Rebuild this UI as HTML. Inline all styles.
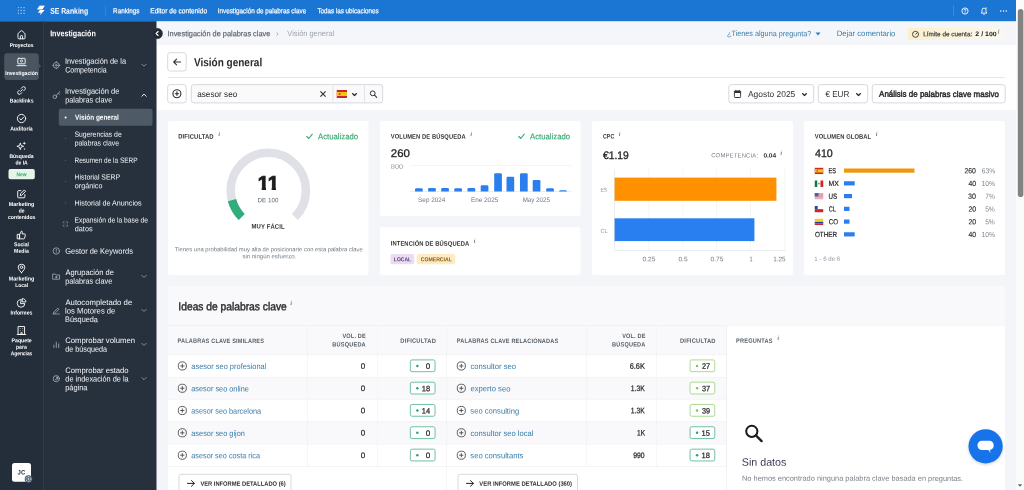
<!DOCTYPE html>
<html lang="es">
<head>
<meta charset="utf-8">
<title>SE Ranking - Investigación de palabras clave</title>
<style>
html,body{margin:0;padding:0;}
body{width:1024px;height:490px;overflow:hidden;background:#f4f5f9;font-family:"Liberation Sans",sans-serif;}
#app{position:relative;width:1024px;height:490px;overflow:hidden;will-change:transform;}
#gfx{position:absolute;left:0;top:0;display:block;}
.t{position:absolute;left:0;top:0;white-space:nowrap;display:block;margin:0;padding:0;transform-origin:0 0;}

</style>
</head>
<body>
<div id="app">
<svg id="gfx" width="1024" height="490" viewBox="0 0 1024 490">
<defs><filter id="sh" x="-30%" y="-30%" width="160%" height="160%"><feDropShadow dx="0" dy="1" stdDeviation="1.6" flood-color="#000" flood-opacity="0.2"/></filter></defs>
<rect x="0" y="0" width="1024" height="490" fill="#f4f5f9"/>
<rect x="156" y="21" width="860" height="24" fill="#f5f6fa"/>
<svg x="815" y="32" width="6" height="4" viewBox="0 0 6 4"><path d="M0.5 0.5 L5.5 0.5 L3 3.5 Z" fill="#2f7fb8"/></svg>
<defs><linearGradient id="lg" x1="0" x2="1" y1="0" y2="0"><stop offset="0" stop-color="#fbefcc"/><stop offset="1" stop-color="#fbf8f0"/></linearGradient></defs><rect x="907.5" y="27.8" width="96" height="12.2" rx="3" fill="url(#lg)"/>
<svg x="911.5" y="30" width="8" height="8" viewBox="0 0 8 8"><circle cx="4" cy="4.3" r="3" fill="none" stroke="#333" stroke-width="0.9"/><path d="M4 4.5 L5.6 2.8" stroke="#333" stroke-width="0.9" fill="none"/></svg>
<rect x="157" y="45" width="859" height="65" fill="#fff"/>
<rect x="168" y="77" width="837" height="1" fill="#e6e8ec"/>
<rect x="167.7" y="52.7" width="18.5" height="18.3" rx="2.5" fill="#fff" stroke="#d6d9de" stroke-width="1"/>
<svg x="172" y="57.5" width="10" height="9" viewBox="0 0 10 9"><path d="M8.6 4.5 H1.8 M4.6 1.6 L1.7 4.5 L4.6 7.4" fill="none" stroke="#333" stroke-width="1.1" stroke-linecap="round" stroke-linejoin="round"/></svg>
<rect x="167.7" y="84.6" width="18.5" height="18.3" rx="2.5" fill="#fff" stroke="#d6d9de" stroke-width="1"/>
<svg x="171.9" y="88.7" width="10" height="10" viewBox="0 0 10 10"><circle cx="5" cy="5" r="4" fill="none" stroke="#2e2e2e" stroke-width="1.15"/><path d="M5 2.9 V7.1 M2.9 5 H7.1" stroke="#2e2e2e" stroke-width="1.15" fill="none"/></svg>
<rect x="191.3" y="84.6" width="191.4" height="18.3" rx="2.5" fill="#fafafb" stroke="#d6d9de" stroke-width="1"/>
<rect x="332.5" y="85.5" width="1" height="16.5" fill="#e1e3e7"/>
<rect x="364" y="85.5" width="1" height="16.5" fill="#e1e3e7"/>
<svg x="319.5" y="90.5" width="7" height="7" viewBox="0 0 7 7"><path d="M0.9 0.9 L6.1 6.1 M6.1 0.9 L0.9 6.1" stroke="#2e2e2e" stroke-width="1.1" fill="none"/></svg>
<svg x="336.5" y="90" width="10.5" height="8" viewBox="0 0 10.5 8"><rect width="10.5" height="8" fill="#c8252c"/><rect y="2" width="10.5" height="4" fill="#f6c315"/><rect x="2.2" y="3" width="1.8" height="2" fill="#b5651d"/></svg>
<svg x="351.5" y="92.5" width="6" height="4" viewBox="0 0 6 4"><path d="M0.8 0.8 L3 3 L5.2 0.8" stroke="#2a2a2a" stroke-width="1.25" fill="none"/></svg>
<svg x="369.2" y="89.8" width="9" height="9" viewBox="0 0 9 9"><circle cx="3.5" cy="3.5" r="2.4" fill="none" stroke="#333" stroke-width="1"/><path d="M5.4 5.4 L7.5 7.5" stroke="#333" stroke-width="1.1" stroke-linecap="round"/></svg>
<rect x="728.8" y="84.6" width="84.9" height="18.3" rx="2.5" fill="#fff" stroke="#d6d9de" stroke-width="1"/>
<svg x="733.5" y="89.5" width="8" height="9" viewBox="0 0 8 9"><rect x="0.8" y="1.5" width="6.4" height="6.5" rx="0.8" fill="none" stroke="#333" stroke-width="1"/><rect x="0.8" y="1.5" width="6.4" height="2" fill="#333"/><path d="M2.4 0.4 V2 M5.6 0.4 V2" stroke="#333" stroke-width="0.9"/></svg>
<svg x="801.5" y="92.5" width="6" height="4" viewBox="0 0 6 4"><path d="M0.8 0.8 L3 3 L5.2 0.8" stroke="#2a2a2a" stroke-width="1.25" fill="none"/></svg>
<rect x="818.3" y="84.6" width="49.4" height="18.3" rx="2.5" fill="#fff" stroke="#d6d9de" stroke-width="1"/>
<svg x="855.5" y="92.5" width="6" height="4" viewBox="0 0 6 4"><path d="M0.8 0.8 L3 3 L5.2 0.8" stroke="#2a2a2a" stroke-width="1.25" fill="none"/></svg>
<rect x="872.3" y="84.6" width="132.9" height="18.3" rx="2.5" fill="#fff" stroke="#d6d9de" stroke-width="1"/>
<rect x="0" y="0" width="1016" height="21.2" fill="#1b75d3"/>
<svg x="17.6" y="6.9" width="8" height="8" viewBox="0 0 8 8"><rect x="0.0" y="0.0" width="1.3" height="1.3" fill="#9cc4ee"/><rect x="2.9" y="0.0" width="1.3" height="1.3" fill="#9cc4ee"/><rect x="5.8" y="0.0" width="1.3" height="1.3" fill="#9cc4ee"/><rect x="0.0" y="2.9" width="1.3" height="1.3" fill="#9cc4ee"/><rect x="2.9" y="2.9" width="1.3" height="1.3" fill="#9cc4ee"/><rect x="5.8" y="2.9" width="1.3" height="1.3" fill="#9cc4ee"/><rect x="0.0" y="5.8" width="1.3" height="1.3" fill="#9cc4ee"/><rect x="2.9" y="5.8" width="1.3" height="1.3" fill="#9cc4ee"/><rect x="5.8" y="5.8" width="1.3" height="1.3" fill="#9cc4ee"/></svg>
<svg x="36.3" y="5.2" width="9" height="10.5" viewBox="0 0 9 10.5"><path d="M3.4 0.4 H8.6 L6.2 4.2 H0.6 Z M3.6 4.9 H8.4 L3.6 10.1 L4.4 7.6 H1.6 Z" fill="#fff"/></svg>
<rect x="105" y="5.5" width="0.8" height="10" fill="#3a88da"/>
<rect x="953" y="5.5" width="1" height="10" fill="#3d8bdc"/>
<svg x="961" y="7" width="8" height="8" viewBox="0 0 8 8"><circle cx="4" cy="4" r="3.1" fill="none" stroke="#fff" stroke-width="0.9"/><path d="M3 3.3 Q3 2.2 4 2.2 Q5 2.2 5 3.1 Q5 3.8 4 4.3 V4.8" fill="none" stroke="#fff" stroke-width="0.8"/><circle cx="4" cy="5.8" r="0.5" fill="#fff"/></svg>
<svg x="980" y="6.5" width="8" height="9" viewBox="0 0 8 9"><path d="M1.2 6.6 H6.8 L6 5.4 V3.6 Q6 1.6 4 1.6 Q2 1.6 2 3.6 V5.4 Z" fill="none" stroke="#fff" stroke-width="0.9" stroke-linejoin="round"/><path d="M3.2 7.6 Q4 8.4 4.8 7.6" stroke="#fff" stroke-width="0.8" fill="none"/><circle cx="6.3" cy="1.6" r="0.9" fill="#7fe0a0"/></svg>
<svg x="999.5" y="9.5" width="8" height="3" viewBox="0 0 8 3"><circle cx="1.2" cy="1.5" r="0.75" fill="#fff"/><circle cx="4" cy="1.5" r="0.75" fill="#fff"/><circle cx="6.8" cy="1.5" r="0.75" fill="#fff"/></svg>
<rect x="1016" y="0" width="8" height="490" fill="#fbfbfc"/>
<rect x="1017.8" y="9" width="5.6" height="188" rx="2.8" fill="#828282"/>
<svg x="1017.5" y="484" width="5" height="3" viewBox="0 0 5 3"><path d="M0.3 0.3 H4.7 L2.5 2.7 Z" fill="#666"/></svg>
<rect x="0" y="21.2" width="43.5" height="469" fill="#242e3a"/>
<rect x="43" y="21.2" width="113.5" height="469" fill="#27313e"/>
<rect x="43" y="21.2" width="0.6" height="469" fill="#3a4450"/>
<rect x="4.2" y="53.3" width="34.6" height="26.7" rx="3" fill="#4a5562"/>
<svg x="38.6" y="63.5" width="3" height="5" viewBox="0 0 3 5"><path d="M0 0 L2.6 2.5 L0 5 Z" fill="#4a5562"/></svg>
<svg x="16" y="29.3" width="11" height="11" viewBox="0 0 18 18"><path d="M3.2 7.6 Q3.2 6.8 3.9 6.2 L8.1 2.6 Q9 1.9 9.9 2.6 L14.1 6.2 Q14.8 6.8 14.8 7.6 V14.2 Q14.8 15.6 13.4 15.6 H4.6 Q3.2 15.6 3.2 14.2 Z" fill="none" stroke="#fff" stroke-width="1.5" stroke-linecap="round" stroke-linejoin="round"/><path d="M7.2 15.4 V11.4 Q7.2 10.4 8.2 10.4 H9.8 Q10.8 10.4 10.8 11.4 V15.4" fill="none" stroke="#fff" stroke-width="1.5" stroke-linecap="round" stroke-linejoin="round"/></svg>
<svg x="16" y="56.5" width="11" height="11" viewBox="0 0 18 18"><rect x="3" y="3" width="12" height="9" rx="1" fill="none" stroke="#fff" stroke-width="1.5" stroke-linecap="round" stroke-linejoin="round"/><path d="M1.5 15 H16.5" fill="none" stroke="#fff" stroke-width="1.5" stroke-linecap="round" stroke-linejoin="round"/><circle cx="9" cy="7.3" r="1.8" fill="none" stroke="#fff" stroke-width="1.3"/></svg>
<svg x="16" y="85" width="11" height="11" viewBox="0 0 18 18"><path d="M7.5 10.5 L10.5 7.5" fill="none" stroke="#fff" stroke-width="1.5" stroke-linecap="round" stroke-linejoin="round"/><path d="M8.5 5.5 L10.5 3.5 Q12.5 1.8 14.5 3.5 Q16.2 5.5 14.5 7.5 L12.5 9.5" fill="none" stroke="#fff" stroke-width="1.5" stroke-linecap="round" stroke-linejoin="round"/><path d="M9.5 12.5 L7.5 14.5 Q5.5 16.2 3.5 14.5 Q1.8 12.5 3.5 10.5 L5.5 8.5" fill="none" stroke="#fff" stroke-width="1.5" stroke-linecap="round" stroke-linejoin="round"/></svg>
<svg x="16" y="113" width="11" height="11" viewBox="0 0 18 18"><circle cx="9" cy="9" r="6.8" fill="none" stroke="#fff" stroke-width="1.5" stroke-linecap="round" stroke-linejoin="round"/><path d="M6 9.2 L8.2 11.4 L12.2 7" fill="none" stroke="#fff" stroke-width="1.5" stroke-linecap="round" stroke-linejoin="round"/></svg>
<svg x="16" y="140.5" width="11" height="11" viewBox="0 0 18 18"><path d="M7 4 L8.3 8.2 L12.5 9.5 L8.3 10.8 L7 15 L5.7 10.8 L1.5 9.5 L5.7 8.2 Z" fill="none" stroke="#fff" stroke-width="1.4" stroke-linejoin="round"/><path d="M13.5 1.5 L14.2 3.8 L16.5 4.5 L14.2 5.2 L13.5 7.5 L12.8 5.2 L10.5 4.5 L12.8 3.8 Z" fill="#fff"/><path d="M14 12 L14.5 13.5 L16 14 L14.5 14.5 L14 16 L13.5 14.5 L12 14 L13.5 13.5 Z" fill="#fff"/></svg>
<rect x="8.5" y="169" width="26.3" height="10.3" rx="2" fill="#e3f6e8"/>
<svg x="16" y="188.5" width="11" height="11" viewBox="0 0 18 18"><path d="M8 3.5 H4 Q2.8 3.5 2.8 4.7 V14 Q2.8 15.2 4 15.2 H13.3 Q14.5 15.2 14.5 14 V10" fill="none" stroke="#fff" stroke-width="1.5" stroke-linecap="round" stroke-linejoin="round"/><path d="M7 11.2 L7.6 8.4 L13.6 2.4 L15.8 4.6 L9.8 10.6 Z" fill="none" stroke="#fff" stroke-width="1.5" stroke-linecap="round" stroke-linejoin="round"/></svg>
<svg x="16" y="229.5" width="11" height="11" viewBox="0 0 18 18"><path d="M6 8 L9 2.5 Q10.8 2.8 10.3 5 L9.8 7.2 H14 Q15.5 7.4 15.2 9 L14.2 14 Q13.8 15.3 12.5 15.3 H6 Z" fill="none" stroke="#fff" stroke-width="1.5" stroke-linecap="round" stroke-linejoin="round"/><rect x="2.6" y="8" width="3.4" height="7.3" fill="none" stroke="#fff" stroke-width="1.5" stroke-linecap="round" stroke-linejoin="round"/></svg>
<svg x="16" y="263" width="11" height="11" viewBox="0 0 18 18"><path d="M9 16 Q3.5 10.5 3.5 7 Q3.5 2 9 2 Q14.5 2 14.5 7 Q14.5 10.5 9 16 Z" fill="none" stroke="#fff" stroke-width="1.5" stroke-linecap="round" stroke-linejoin="round"/><circle cx="9" cy="7" r="2" fill="none" stroke="#fff" stroke-width="1.5" stroke-linecap="round" stroke-linejoin="round"/></svg>
<svg x="16" y="297.5" width="11" height="11" viewBox="0 0 18 18"><path d="M8 3.5 A6.2 6.2 0 1 0 14.5 10 H8 Z" fill="none" stroke="#fff" stroke-width="1.5" stroke-linecap="round" stroke-linejoin="round"/><path d="M10.8 1.8 A5.2 5.2 0 0 1 16.2 7.2 H10.8 Z" fill="none" stroke="#fff" stroke-width="1.5" stroke-linecap="round" stroke-linejoin="round"/></svg>
<svg x="16" y="325" width="11" height="11" viewBox="0 0 18 18"><rect x="4" y="2.5" width="10" height="13" fill="none" stroke="#fff" stroke-width="1.5" stroke-linecap="round" stroke-linejoin="round"/><path d="M2 15.5 H16" fill="none" stroke="#fff" stroke-width="1.5" stroke-linecap="round" stroke-linejoin="round"/><path d="M7 5.5 V6.5 M11 5.5 V6.5 M7 9 V10 M11 9 V10 M8 15.5 V12.5 H10 V15.5" fill="none" stroke="#fff" stroke-width="1.4"/></svg>
<rect x="12" y="463" width="19" height="18.7" rx="2.5" fill="#fff"/>
<svg x="23.5" y="474" width="10" height="10" viewBox="0 0 10 10"><circle cx="5" cy="5" r="3.8" fill="#4a5a6a"/><circle cx="5" cy="5" r="2.4" fill="none" stroke="#c9d3dc" stroke-width="1.1" stroke-dasharray="1 0.6"/><circle cx="5" cy="5" r="0.9" fill="#c9d3dc"/></svg>
<svg x="150.8" y="27" width="13" height="13" viewBox="0 0 13 13"><circle cx="6.5" cy="6.5" r="5.2" fill="#222b36" stroke="#323c49" stroke-width="0.6"/><path d="M7.3 4.5 L5.3 6.5 L7.3 8.5" fill="none" stroke="#fff" stroke-width="1.1" stroke-linecap="round" stroke-linejoin="round"/></svg>
<svg x="52.1" y="61.1" width="8.4" height="8.4" viewBox="0 0 14 14"><circle cx="7" cy="7" r="4.8" fill="none" stroke="#aab3bd" stroke-width="1.3" stroke-linecap="round" stroke-linejoin="round"/><circle cx="7" cy="7" r="1.4" fill="none" stroke="#aab3bd" stroke-width="1.3" stroke-linecap="round" stroke-linejoin="round"/><path d="M7 0.8 V2.2 M7 11.8 V13.2 M0.8 7 H2.2 M11.8 7 H13.2" fill="none" stroke="#aab3bd" stroke-width="1.3" stroke-linecap="round" stroke-linejoin="round"/></svg>
<svg x="141" y="63.3" width="6" height="4" viewBox="0 0 6 4"><path d="M0.8 0.8 L3 3 L5.2 0.8" fill="none" stroke="#8d97a3" stroke-width="0.9" stroke-linecap="round" stroke-linejoin="round"/></svg>
<svg x="52.1" y="91.1" width="8.4" height="8.4" viewBox="0 0 14 14"><circle cx="4.6" cy="9.4" r="3" fill="none" stroke="#aab3bd" stroke-width="1.3" stroke-linecap="round" stroke-linejoin="round"/><path d="M6.8 7.2 L12.4 1.6 M10.2 3.8 L12 5.6 M12.4 1.6 L13.2 2.4" fill="none" stroke="#aab3bd" stroke-width="1.3" stroke-linecap="round" stroke-linejoin="round"/></svg>
<svg x="141" y="93.3" width="6" height="4" viewBox="0 0 6 4"><path d="M0.8 3 L3 0.8 L5.2 3" fill="none" stroke="#fff" stroke-width="0.9" stroke-linecap="round" stroke-linejoin="round"/></svg>
<rect x="58.8" y="108.8" width="93.7" height="17" rx="2" fill="#4f5a67"/>
<ellipse cx="65.6" cy="117.4" rx="1" ry="1" fill="#fff"/>
<rect x="65.2" y="138" width="0.9" height="0.9" rx="1" fill="#8d97a3"/>
<rect x="65.2" y="159.8" width="0.9" height="0.9" rx="1" fill="#8d97a3"/>
<rect x="65.2" y="181" width="0.9" height="0.9" rx="1" fill="#8d97a3"/>
<rect x="65.2" y="202.5" width="0.9" height="0.9" rx="1" fill="#8d97a3"/>
<svg x="62.3" y="221" width="6" height="6" viewBox="0 0 14 14"><path d="M2 4.5 V2 H4.5 M9.5 2 H12 V4.5 M12 9.5 V12 H9.5 M4.5 12 H2 V9.5" fill="none" stroke="#aab3bd" stroke-width="1.3" stroke-linecap="round" stroke-linejoin="round"/><circle cx="7" cy="7" r="1" fill="#aab3bd"/></svg>
<svg x="52.1" y="246.8" width="8.4" height="8.4" viewBox="0 0 14 14"><circle cx="7" cy="7" r="5.4" fill="none" stroke="#aab3bd" stroke-width="1.3" stroke-linecap="round" stroke-linejoin="round"/><path d="M7 4 V7.4 M7 9.8 V10" fill="none" stroke="#aab3bd" stroke-width="1.3" stroke-linecap="round" stroke-linejoin="round"/></svg>
<svg x="52.1" y="272.3" width="8.4" height="8.4" viewBox="0 0 14 14"><path d="M1.5 3 H5.5 L7 4.6 H12.5 V11.5 H1.5 Z" fill="none" stroke="#aab3bd" stroke-width="1.3" stroke-linecap="round" stroke-linejoin="round"/><path d="M7 6.6 V9.6 M5.5 8.1 H8.5" fill="none" stroke="#aab3bd" stroke-width="1.3" stroke-linecap="round" stroke-linejoin="round"/></svg>
<svg x="141" y="274.5" width="6" height="4" viewBox="0 0 6 4"><path d="M0.8 0.8 L3 3 L5.2 0.8" fill="none" stroke="#8d97a3" stroke-width="0.9" stroke-linecap="round" stroke-linejoin="round"/></svg>
<svg x="52.1" y="306.3" width="8.4" height="8.4" viewBox="0 0 14 14"><path d="M3 9.5 L9.5 3 L11.5 5 L5 11.5 L2.6 11.9 Z" fill="none" stroke="#aab3bd" stroke-width="1.3" stroke-linecap="round" stroke-linejoin="round"/><path d="M1.5 13 H12.5" fill="none" stroke="#aab3bd" stroke-width="1.3" stroke-linecap="round" stroke-linejoin="round"/></svg>
<svg x="141" y="308.5" width="6" height="4" viewBox="0 0 6 4"><path d="M0.8 0.8 L3 3 L5.2 0.8" fill="none" stroke="#8d97a3" stroke-width="0.9" stroke-linecap="round" stroke-linejoin="round"/></svg>
<svg x="52.1" y="340.3" width="8.4" height="8.4" viewBox="0 0 14 14"><path d="M3 8 V12 M7 3 V12 M11 6 V12" fill="none" stroke="#aab3bd" stroke-width="1.3" stroke-linecap="round" stroke-linejoin="round"/></svg>
<svg x="141" y="342.5" width="6" height="4" viewBox="0 0 6 4"><path d="M0.8 0.8 L3 3 L5.2 0.8" fill="none" stroke="#8d97a3" stroke-width="0.9" stroke-linecap="round" stroke-linejoin="round"/></svg>
<svg x="52.1" y="374.5" width="8.4" height="8.4" viewBox="0 0 14 14"><circle cx="7" cy="7" r="5.2" fill="none" stroke="#aab3bd" stroke-width="1.3" stroke-linecap="round" stroke-linejoin="round"/><path d="M7 7 V3.5 A3.5 3.5 0 0 1 10.5 7 Z" fill="#aab3bd"/><path d="M5.4 8.6 A2.3 2.3 0 0 0 8.6 8.6" fill="none" stroke="#aab3bd" stroke-width="1.3" stroke-linecap="round" stroke-linejoin="round"/></svg>
<svg x="141" y="376.7" width="6" height="4" viewBox="0 0 6 4"><path d="M0.8 0.8 L3 3 L5.2 0.8" fill="none" stroke="#8d97a3" stroke-width="0.9" stroke-linecap="round" stroke-linejoin="round"/></svg>
<rect x="168" y="121" width="200.5" height="154" rx="2.5" fill="#fff"/>
<rect x="380" y="121" width="200.5" height="95" rx="2.5" fill="#fff"/>
<rect x="380" y="227" width="200.5" height="48" rx="2.5" fill="#fff"/>
<rect x="592" y="121" width="201" height="154" rx="2.5" fill="#fff"/>
<rect x="804" y="121" width="201" height="154" rx="2.5" fill="#fff"/>
<svg x="306" y="133.3" width="7" height="6" viewBox="0 0 7 6"><path d="M0.8 3.2 L2.8 5.2 L6.3 0.9" fill="none" stroke="#3aa772" stroke-width="1.1" stroke-linecap="round" stroke-linejoin="round"/></svg>
<svg x="218" y="139.5" width="100" height="100" viewBox="0 0 100 100"><path d="M23.71 77.49 A37.6 37.6 0 1 1 76.89 77.49" fill="none" stroke="#dfe1e7" stroke-width="8.6"/><path d="M23.71 77.49 A37.6 37.6 0 0 1 13.98 60.63" fill="none" stroke="#2fae7c" stroke-width="8.6"/></svg>
<svg x="518" y="133.3" width="7" height="6" viewBox="0 0 7 6"><path d="M0.8 3.2 L2.8 5.2 L6.3 0.9" fill="none" stroke="#3aa772" stroke-width="1.1" stroke-linecap="round" stroke-linejoin="round"/></svg>
<rect x="410" y="165" width="161.5" height="0.6" fill="#eceef1"/>
<rect x="410" y="191.3" width="161.5" height="0.6" fill="#e0e3e8"/>
<path d="M415 191.5 V189.4 Q415 188.2 416.2 188.2 H421.5 Q422.7 188.2 422.7 189.4 V191.5 Z" fill="#2a7eee"/>
<path d="M428.1 191.5 V189.2 Q428.1 188 429.3 188 H434.6 Q435.8 188 435.8 189.2 V191.5 Z" fill="#2a7eee"/>
<path d="M441.2 191.5 V189.2 Q441.2 188 442.4 188 H447.7 Q448.9 188 448.9 189.2 V191.5 Z" fill="#2a7eee"/>
<path d="M454.3 191.5 V189.5 Q454.3 188.3 455.5 188.3 H460.8 Q462 188.3 462 189.5 V191.5 Z" fill="#2a7eee"/>
<path d="M467.5 191.5 V189.2 Q467.5 188 468.7 188 H474 Q475.2 188 475.2 189.2 V191.5 Z" fill="#2a7eee"/>
<path d="M480.7 191.5 V186.4 Q480.7 185.2 481.9 185.2 H487.2 Q488.4 185.2 488.4 186.4 V191.5 Z" fill="#2a7eee"/>
<path d="M494.2 191.5 V174.5 Q494.2 173.3 495.4 173.3 H500.7 Q501.9 173.3 501.9 174.5 V191.5 Z" fill="#2a7eee"/>
<path d="M506.5 191.5 V178 Q506.5 176.8 507.7 176.8 H513 Q514.2 176.8 514.2 178 V191.5 Z" fill="#2a7eee"/>
<path d="M520 191.5 V174.5 Q520 173.3 521.2 173.3 H526.5 Q527.7 173.3 527.7 174.5 V191.5 Z" fill="#2a7eee"/>
<path d="M532.7 191.5 V181.2 Q532.7 180 533.9 180 H539.2 Q540.4 180 540.4 181.2 V191.5 Z" fill="#2a7eee"/>
<path d="M546.2 191.5 V189.4 Q546.2 188.2 547.4 188.2 H552.7 Q553.9 188.2 553.9 189.4 V191.5 Z" fill="#2a7eee"/>
<path d="M559.2 191.5 V191.4 Q559.2 190.2 560.4 190.2 H565.7 Q566.9 190.2 566.9 191.4 V191.5 Z" fill="#2a7eee"/>
<rect x="390.5" y="254" width="23.7" height="10.2" rx="2" fill="#ebdcf2"/>
<rect x="416.7" y="254" width="38.5" height="10.2" rx="2" fill="#fdebc4"/>
<rect x="648.6" y="169" width="0.6" height="81" fill="#eceef1"/>
<rect x="682.6" y="169" width="0.6" height="81" fill="#eceef1"/>
<rect x="716.5" y="169" width="0.6" height="81" fill="#eceef1"/>
<rect x="750.4" y="169" width="0.6" height="81" fill="#eceef1"/>
<rect x="784.6" y="169" width="0.6" height="81" fill="#eceef1"/>
<rect x="614.3" y="169" width="0.6" height="81" fill="#dcdfe4"/>
<rect x="614.3" y="250" width="171.3" height="0.6" fill="#dcdfe4"/>
<rect x="614.6" y="177.6" width="161.8" height="23.2" fill="#ff9000"/>
<rect x="614.6" y="218.3" width="139.8" height="22.8" fill="#2a7ff0"/>
<svg x="814.5" y="167.6" width="9" height="6.6" viewBox="0 0 9 6.6"><rect width="9" height="6.6" fill="#c8252c"/><rect y="1.7" width="9" height="3.2" fill="#f6c315"/><rect x="2" y="2.5" width="1.4" height="1.6" fill="#b5651d"/></svg>
<rect x="844" y="168.5" width="70.5" height="4.2" fill="#f0960f"/>
<svg x="814.5" y="180.35" width="9" height="6.6" viewBox="0 0 9 6.6"><rect width="3" height="6.6" fill="#0b7a4b"/><rect x="3" width="3" height="6.6" fill="#fff"/><rect x="6" width="3" height="6.6" fill="#d2232a"/><circle cx="4.5" cy="3.3" r="0.8" fill="#9c6b30"/></svg>
<rect x="844" y="181.25" width="10.7" height="4.2" fill="#2a7eee"/>
<svg x="814.5" y="193.1" width="9" height="6.6" viewBox="0 0 9 6.6"><rect width="9" height="6.6" fill="#f2f2f2"/><rect y="0.00" width="9" height="0.55" fill="#d9627a"/><rect y="1.10" width="9" height="0.55" fill="#d9627a"/><rect y="2.20" width="9" height="0.55" fill="#d9627a"/><rect y="3.30" width="9" height="0.55" fill="#d9627a"/><rect y="4.40" width="9" height="0.55" fill="#d9627a"/><rect y="5.50" width="9" height="0.55" fill="#d9627a"/><rect width="4" height="3.3" fill="#4a5fa8"/></svg>
<rect x="844" y="194" width="8" height="4.2" fill="#2a7eee"/>
<svg x="814.5" y="205.85" width="9" height="6.6" viewBox="0 0 9 6.6"><rect width="9" height="3.3" fill="#fff"/><rect y="3.3" width="9" height="3.3" fill="#d2232a"/><rect width="3.2" height="3.3" fill="#1f4aa8"/></svg>
<rect x="844" y="206.75" width="5.5" height="4.2" fill="#2a7eee"/>
<svg x="814.5" y="218.6" width="9" height="6.6" viewBox="0 0 9 6.6"><rect width="9" height="3.3" fill="#f6d016"/><rect y="3.3" width="9" height="1.65" fill="#1f3d99"/><rect y="4.95" width="9" height="1.65" fill="#cf2436"/></svg>
<rect x="844" y="219.5" width="5.5" height="4.2" fill="#2a7eee"/>
<rect x="844" y="232.25" width="10.7" height="4.2" fill="#2a7eee"/>
<rect x="168" y="286" width="837" height="204" fill="#f9f9fb"/>
<rect x="168" y="325" width="837" height="0.7" fill="#eceef1"/>
<rect x="726.5" y="325.5" width="278.5" height="164.5" fill="#fff"/>
<rect x="168" y="466.4" width="558.5" height="23.6" fill="#fff"/>
<rect x="168" y="354.6" width="139.2" height="22.3" fill="#ffffff"/>
<rect x="307.2" y="354.6" width="70.1" height="22.3" fill="#ffffff"/>
<rect x="377.3" y="354.6" width="69.1" height="22.3" fill="#ffffff"/>
<rect x="446.4" y="354.6" width="139.8" height="22.3" fill="#ffffff"/>
<rect x="586.2" y="354.6" width="70.1" height="22.3" fill="#ffffff"/>
<rect x="656.3" y="354.6" width="70.1" height="22.3" fill="#ffffff"/>
<rect x="168" y="376.9" width="139.2" height="22.3" fill="#f9f9fb"/>
<rect x="307.2" y="376.9" width="70.1" height="22.3" fill="#f9f9fb"/>
<rect x="377.3" y="376.9" width="69.1" height="22.3" fill="#f9f9fb"/>
<rect x="446.4" y="376.9" width="139.8" height="22.3" fill="#f9f9fb"/>
<rect x="586.2" y="376.9" width="70.1" height="22.3" fill="#f9f9fb"/>
<rect x="656.3" y="376.9" width="70.1" height="22.3" fill="#f9f9fb"/>
<rect x="168" y="399.2" width="139.2" height="22.2" fill="#ffffff"/>
<rect x="307.2" y="399.2" width="70.1" height="22.2" fill="#ffffff"/>
<rect x="377.3" y="399.2" width="69.1" height="22.2" fill="#ffffff"/>
<rect x="446.4" y="399.2" width="139.8" height="22.2" fill="#ffffff"/>
<rect x="586.2" y="399.2" width="70.1" height="22.2" fill="#ffffff"/>
<rect x="656.3" y="399.2" width="70.1" height="22.2" fill="#ffffff"/>
<rect x="168" y="421.4" width="139.2" height="22.4" fill="#f9f9fb"/>
<rect x="307.2" y="421.4" width="70.1" height="22.4" fill="#f9f9fb"/>
<rect x="377.3" y="421.4" width="69.1" height="22.4" fill="#f9f9fb"/>
<rect x="446.4" y="421.4" width="139.8" height="22.4" fill="#f9f9fb"/>
<rect x="586.2" y="421.4" width="70.1" height="22.4" fill="#f9f9fb"/>
<rect x="656.3" y="421.4" width="70.1" height="22.4" fill="#f9f9fb"/>
<rect x="168" y="443.8" width="139.2" height="22.4" fill="#ffffff"/>
<rect x="307.2" y="443.8" width="70.1" height="22.4" fill="#ffffff"/>
<rect x="377.3" y="443.8" width="69.1" height="22.4" fill="#ffffff"/>
<rect x="446.4" y="443.8" width="139.8" height="22.4" fill="#ffffff"/>
<rect x="586.2" y="443.8" width="70.1" height="22.4" fill="#ffffff"/>
<rect x="656.3" y="443.8" width="70.1" height="22.4" fill="#ffffff"/>
<rect x="168" y="354.6" width="558.5" height="0.6" fill="#f0f1f4"/>
<rect x="168" y="376.9" width="558.5" height="0.6" fill="#f0f1f4"/>
<rect x="168" y="399.2" width="558.5" height="0.6" fill="#f0f1f4"/>
<rect x="168" y="421.4" width="558.5" height="0.6" fill="#f0f1f4"/>
<rect x="168" y="443.8" width="558.5" height="0.6" fill="#f0f1f4"/>
<rect x="168" y="466.2" width="558.5" height="0.6" fill="#f0f1f4"/>
<rect x="307.2" y="325.5" width="0.6" height="141" fill="#f0f1f4"/>
<rect x="377.3" y="325.5" width="0.6" height="141" fill="#f0f1f4"/>
<rect x="446.4" y="325.5" width="0.6" height="141" fill="#f0f1f4"/>
<rect x="586.2" y="325.5" width="0.6" height="141" fill="#f0f1f4"/>
<rect x="656.3" y="325.5" width="0.6" height="141" fill="#f0f1f4"/>
<rect x="726.4" y="325.5" width="0.6" height="141" fill="#f0f1f4"/>
<rect x="446.4" y="466" width="0.6" height="24" fill="#eef0f3"/>
<rect x="726.4" y="325.5" width="0.6" height="164.5" fill="#e9ebee"/>
<svg x="177.3" y="360.95" width="10" height="10" viewBox="0 0 10 10"><circle cx="5" cy="5" r="4.1" fill="none" stroke="#4a4a4a" stroke-width="0.9"/><path d="M5 2.9 V7.1 M2.9 5 H7.1" stroke="#4a4a4a" stroke-width="0.9" fill="none"/></svg>
<rect x="410.35" y="359.9" width="24.7" height="11.8" rx="1.75" fill="#fff" stroke="#5fba9b" stroke-width="0.9"/>
<ellipse cx="417.35" cy="365.9" rx="1.25" ry="1.25" fill="#2e9e74"/>
<svg x="456.3" y="360.95" width="10" height="10" viewBox="0 0 10 10"><circle cx="5" cy="5" r="4.1" fill="none" stroke="#4a4a4a" stroke-width="0.9"/><path d="M5 2.9 V7.1 M2.9 5 H7.1" stroke="#4a4a4a" stroke-width="0.9" fill="none"/></svg>
<rect x="690.05" y="359.9" width="24.7" height="11.8" rx="1.75" fill="#fff" stroke="#a3d586" stroke-width="0.9"/>
<ellipse cx="697.05" cy="365.9" rx="1.25" ry="1.25" fill="#7cc35a"/>
<svg x="177.3" y="383.25" width="10" height="10" viewBox="0 0 10 10"><circle cx="5" cy="5" r="4.1" fill="none" stroke="#4a4a4a" stroke-width="0.9"/><path d="M5 2.9 V7.1 M2.9 5 H7.1" stroke="#4a4a4a" stroke-width="0.9" fill="none"/></svg>
<rect x="410.35" y="382.2" width="24.7" height="11.8" rx="1.75" fill="#fff" stroke="#5fba9b" stroke-width="0.9"/>
<ellipse cx="417.35" cy="388.2" rx="1.25" ry="1.25" fill="#2e9e74"/>
<svg x="456.3" y="383.25" width="10" height="10" viewBox="0 0 10 10"><circle cx="5" cy="5" r="4.1" fill="none" stroke="#4a4a4a" stroke-width="0.9"/><path d="M5 2.9 V7.1 M2.9 5 H7.1" stroke="#4a4a4a" stroke-width="0.9" fill="none"/></svg>
<rect x="690.05" y="382.2" width="24.7" height="11.8" rx="1.75" fill="#fff" stroke="#a3d586" stroke-width="0.9"/>
<ellipse cx="697.05" cy="388.2" rx="1.25" ry="1.25" fill="#7cc35a"/>
<svg x="177.3" y="405.5" width="10" height="10" viewBox="0 0 10 10"><circle cx="5" cy="5" r="4.1" fill="none" stroke="#4a4a4a" stroke-width="0.9"/><path d="M5 2.9 V7.1 M2.9 5 H7.1" stroke="#4a4a4a" stroke-width="0.9" fill="none"/></svg>
<rect x="410.35" y="404.45" width="24.7" height="11.8" rx="1.75" fill="#fff" stroke="#5fba9b" stroke-width="0.9"/>
<ellipse cx="417.35" cy="410.45" rx="1.25" ry="1.25" fill="#2e9e74"/>
<svg x="456.3" y="405.5" width="10" height="10" viewBox="0 0 10 10"><circle cx="5" cy="5" r="4.1" fill="none" stroke="#4a4a4a" stroke-width="0.9"/><path d="M5 2.9 V7.1 M2.9 5 H7.1" stroke="#4a4a4a" stroke-width="0.9" fill="none"/></svg>
<rect x="690.05" y="404.45" width="24.7" height="11.8" rx="1.75" fill="#fff" stroke="#a3d586" stroke-width="0.9"/>
<ellipse cx="697.05" cy="410.45" rx="1.25" ry="1.25" fill="#7cc35a"/>
<svg x="177.3" y="427.8" width="10" height="10" viewBox="0 0 10 10"><circle cx="5" cy="5" r="4.1" fill="none" stroke="#4a4a4a" stroke-width="0.9"/><path d="M5 2.9 V7.1 M2.9 5 H7.1" stroke="#4a4a4a" stroke-width="0.9" fill="none"/></svg>
<rect x="410.35" y="426.75" width="24.7" height="11.8" rx="1.75" fill="#fff" stroke="#5fba9b" stroke-width="0.9"/>
<ellipse cx="417.35" cy="432.75" rx="1.25" ry="1.25" fill="#2e9e74"/>
<svg x="456.3" y="427.8" width="10" height="10" viewBox="0 0 10 10"><circle cx="5" cy="5" r="4.1" fill="none" stroke="#4a4a4a" stroke-width="0.9"/><path d="M5 2.9 V7.1 M2.9 5 H7.1" stroke="#4a4a4a" stroke-width="0.9" fill="none"/></svg>
<rect x="690.05" y="426.75" width="24.7" height="11.8" rx="1.75" fill="#fff" stroke="#5fba9b" stroke-width="0.9"/>
<ellipse cx="697.05" cy="432.75" rx="1.25" ry="1.25" fill="#2e9e74"/>
<svg x="177.3" y="450.2" width="10" height="10" viewBox="0 0 10 10"><circle cx="5" cy="5" r="4.1" fill="none" stroke="#4a4a4a" stroke-width="0.9"/><path d="M5 2.9 V7.1 M2.9 5 H7.1" stroke="#4a4a4a" stroke-width="0.9" fill="none"/></svg>
<rect x="410.35" y="449.15" width="24.7" height="11.8" rx="1.75" fill="#fff" stroke="#5fba9b" stroke-width="0.9"/>
<ellipse cx="417.35" cy="455.15" rx="1.25" ry="1.25" fill="#2e9e74"/>
<svg x="456.3" y="450.2" width="10" height="10" viewBox="0 0 10 10"><circle cx="5" cy="5" r="4.1" fill="none" stroke="#4a4a4a" stroke-width="0.9"/><path d="M5 2.9 V7.1 M2.9 5 H7.1" stroke="#4a4a4a" stroke-width="0.9" fill="none"/></svg>
<rect x="690.05" y="449.15" width="24.7" height="11.8" rx="1.75" fill="#fff" stroke="#5fba9b" stroke-width="0.9"/>
<ellipse cx="697.05" cy="455.15" rx="1.25" ry="1.25" fill="#2e9e74"/>
<rect x="179" y="474.3" width="112" height="21" rx="2" fill="#fff" stroke="#d6d9de" stroke-width="1"/>
<svg x="186.5" y="479.4" width="9" height="8" viewBox="0 0 9 8"><path d="M1 4 H7.8 M5 1.2 L7.9 4 L5 6.8" fill="none" stroke="#222" stroke-width="1" stroke-linecap="round" stroke-linejoin="round"/></svg>
<rect x="458" y="474.3" width="119.5" height="21" rx="2" fill="#fff" stroke="#d6d9de" stroke-width="1"/>
<svg x="465.5" y="479.4" width="9" height="8" viewBox="0 0 9 8"><path d="M1 4 H7.8 M5 1.2 L7.9 4 L5 6.8" fill="none" stroke="#222" stroke-width="1" stroke-linecap="round" stroke-linejoin="round"/></svg>
<svg x="744" y="423.5" width="20" height="20" viewBox="0 0 20 20"><circle cx="7.8" cy="7.8" r="5.6" fill="none" stroke="#1c1c1c" stroke-width="2"/><path d="M12 12 L17.6 17.6" stroke="#1c1c1c" stroke-width="2.4" stroke-linecap="round"/></svg>
<ellipse cx="985.6" cy="446.3" rx="17.1" ry="17.1" fill="#1873ea" filter="url(#sh)"/>
<svg x="976.5" y="439.5" width="18" height="15" viewBox="0 0 18 15"><rect x="1" y="1.2" width="16.2" height="9.3" rx="4.4" fill="#fff"/><path d="M11.4 10 L14.2 13.6 L13.2 10 Z" fill="#fff"/></svg>
</svg>
<div class="breadcrumbs">
<span class="t" style="font-size:7.8px;line-height:9.75px;-webkit-text-stroke:0.15px;color:#565d67;transform:translate(167.52px,29.25px) scaleX(0.945) rotate(0.03deg);">Investigación de palabras clave</span>
<span class="t" style="font-size:8px;line-height:10px;color:#a0a6ad;transform:translate(275.97px,29.3px) rotate(0.03deg);">›</span>
<span class="t" style="font-size:7.8px;line-height:9.75px;color:#9ea4ab;transform:translate(287.32px,29.1px) scaleX(0.952) rotate(0.03deg);">Visión general</span>
<span class="t" style="font-size:7.8px;line-height:9.75px;color:#3a7dab;transform:translate(727.08px,29.1px) scaleX(0.928) rotate(0.03deg);">¿Tienes alguna pregunta?</span>
<span class="t" style="font-size:7.8px;line-height:9.75px;color:#3a7dab;transform:translate(836.68px,29.1px) scaleX(0.989) rotate(0.03deg);">Dejar comentario</span>
<span class="t" style="font-size:6.5px;line-height:8.12px;-webkit-text-stroke:0.2px;color:#3a3a3a;transform:translate(923.24px,30.14px) scaleX(0.982) rotate(0.03deg);">Límite de cuenta:</span>
<span class="t" style="font-size:6.6px;line-height:8.25px;font-weight:700;color:#222;transform:translate(975.37px,30.12px) scaleX(1.054) rotate(0.03deg);">2 / 100</span>
<span class="t" style="font-size:6.6px;line-height:8.25px;font-style:italic;font-family:'Liberation Serif',serif;color:#444;transform:translate(997.69px,27.62px) rotate(0.03deg);">i</span>
</div>
<section class="page-header">
<h1 class="t" style="font-size:11.6px;line-height:14.5px;font-weight:700;color:#2a2a2a;transform:translate(193.96px,55.28px) scaleX(0.863) rotate(0.03deg);">Visión general</h1>
<span class="t" style="font-size:8.6px;line-height:10.75px;color:#2a2a2a;transform:translate(197.22px,89.01px) scaleX(0.952) rotate(0.03deg);">asesor seo</span>
<span class="t" style="font-size:8.6px;line-height:10.75px;color:#333;transform:translate(747.96px,89.01px) scaleX(0.981) rotate(0.03deg);">Agosto 2025</span>
<span class="t" style="font-size:8.6px;line-height:10.75px;color:#333;transform:translate(825.4px,89.05px) scaleX(0.945) rotate(0.03deg);">€ EUR</span>
<span class="t" style="font-size:8.4px;line-height:10.5px;-webkit-text-stroke:0.42px;color:#2a2a2a;transform:translate(879.08px,88.85px) scaleX(0.953) rotate(0.03deg);">Análisis de palabras clave masivo</span>
</section>
<header class="topbar">
<span class="t" style="font-size:8.3px;line-height:10.38px;font-weight:700;color:#fff;transform:translate(50.13px,5.68px) scaleX(0.825) rotate(0.03deg);">SE Ranking</span>
<span class="t" style="font-size:7.2px;line-height:9px;-webkit-text-stroke:0.2px;color:#fff;transform:translate(113.08px,6.3px) scaleX(0.877) rotate(0.03deg);">Rankings</span>
<span class="t" style="font-size:7.2px;line-height:9px;-webkit-text-stroke:0.2px;color:#fff;transform:translate(150.25px,6.3px) scaleX(0.918) rotate(0.03deg);">Editor de contenido</span>
<span class="t" style="font-size:7.2px;line-height:9px;-webkit-text-stroke:0.2px;color:#fff;transform:translate(217.72px,6.3px) scaleX(0.882) rotate(0.03deg);">Investigación de palabras clave</span>
<span class="t" style="font-size:7.2px;line-height:9px;-webkit-text-stroke:0.2px;color:#fff;transform:translate(317.42px,6.3px) scaleX(0.871) rotate(0.03deg);">Todas las ubicaciones</span>
</header>
<nav class="rail">
<span class="t" style="font-size:5.6px;line-height:7px;font-weight:700;color:#fff;transform:translate(9.68px,42.1px) scaleX(0.878) rotate(0.03deg);">Proyectos</span>
<span class="t" style="font-size:5.6px;line-height:7px;font-weight:700;color:#fff;transform:translate(5.22px,70.1px) scaleX(0.915) rotate(0.03deg);">Investigación</span>
<span class="t" style="font-size:5.6px;line-height:7px;font-weight:700;color:#fff;transform:translate(9.87px,97.4px) scaleX(0.904) rotate(0.03deg);">Backlinks</span>
<span class="t" style="font-size:5.6px;line-height:7px;font-weight:700;color:#fff;transform:translate(10.15px,125.4px) scaleX(0.918) rotate(0.03deg);">Auditoría</span>
<span class="t" style="font-size:5.6px;line-height:7px;font-weight:700;color:#fff;transform:translate(9.42px,152.9px) scaleX(0.890) rotate(0.03deg);">Búsqueda</span>
<span class="t" style="font-size:5.6px;line-height:7px;font-weight:700;color:#fff;transform:translate(15.45px,159.4px) scaleX(0.896) rotate(0.03deg);">de IA</span>
<span class="t" style="font-size:5.6px;line-height:7px;font-weight:700;color:#3aa772;transform:translate(16.51px,171.2px) scaleX(0.876) rotate(0.03deg);">New</span>
<span class="t" style="font-size:5.6px;line-height:7px;font-weight:700;color:#fff;transform:translate(8.81px,200.9px) scaleX(0.964) rotate(0.03deg);">Marketing</span>
<span class="t" style="font-size:5.6px;line-height:7px;font-weight:700;color:#fff;transform:translate(18.69px,207.4px) scaleX(0.885) rotate(0.03deg);">de</span>
<span class="t" style="font-size:5.6px;line-height:7px;font-weight:700;color:#fff;transform:translate(8.01px,213.9px) scaleX(0.919) rotate(0.03deg);">contenidos</span>
<span class="t" style="font-size:5.6px;line-height:7px;font-weight:700;color:#fff;transform:translate(14.03px,241.2px) scaleX(0.903) rotate(0.03deg);">Social</span>
<span class="t" style="font-size:5.6px;line-height:7px;font-weight:700;color:#fff;transform:translate(14.12px,247.7px) scaleX(0.924) rotate(0.03deg);">Media</span>
<span class="t" style="font-size:5.6px;line-height:7px;font-weight:700;color:#fff;transform:translate(8.81px,275.4px) scaleX(0.964) rotate(0.03deg);">Marketing</span>
<span class="t" style="font-size:5.6px;line-height:7px;font-weight:700;color:#fff;transform:translate(15.26px,281.9px) scaleX(0.871) rotate(0.03deg);">Local</span>
<span class="t" style="font-size:5.6px;line-height:7px;font-weight:700;color:#fff;transform:translate(10.6px,309.6px) scaleX(0.923) rotate(0.03deg);">Informes</span>
<span class="t" style="font-size:5.6px;line-height:7px;font-weight:700;color:#fff;transform:translate(11.52px,337.2px) scaleX(0.930) rotate(0.03deg);">Paquete</span>
<span class="t" style="font-size:5.6px;line-height:7px;font-weight:700;color:#fff;transform:translate(15.98px,343.7px) scaleX(0.913) rotate(0.03deg);">para</span>
<span class="t" style="font-size:5.6px;line-height:7px;font-weight:700;color:#fff;transform:translate(10.69px,350.2px) scaleX(0.870) rotate(0.03deg);">Agencias</span>
<span class="t" style="font-size:6.4px;line-height:8px;font-weight:700;color:#27313e;transform:translate(17.61px,468.62px) scaleX(0.930) rotate(0.03deg);">JC</span>
</nav>
<nav class="sidebar">
<span class="t" style="font-size:8.4px;line-height:10.5px;font-weight:700;color:#fff;transform:translate(50.14px,28.18px) scaleX(0.854) rotate(0.03deg);">Investigación</span>
<span class="t" style="font-size:7.9px;line-height:9.88px;color:#f4f6f8;transform:translate(64.89px,56.71px) scaleX(0.935) rotate(0.03deg);">Investigación de la</span>
<span class="t" style="font-size:7.9px;line-height:9.88px;color:#f4f6f8;transform:translate(65.26px,65.41px) scaleX(0.891) rotate(0.03deg);">Competencia</span>
<span class="t" style="font-size:7.9px;line-height:9.88px;color:#f4f6f8;transform:translate(64.89px,86.71px) scaleX(0.956) rotate(0.03deg);">Investigación de</span>
<span class="t" style="font-size:7.9px;line-height:9.88px;color:#f4f6f8;transform:translate(65.13px,95.41px) scaleX(0.927) rotate(0.03deg);">palabras clave</span>
<span class="t" style="font-size:7.4px;line-height:9.25px;font-weight:700;color:#fff;transform:translate(74.99px,112.78px) scaleX(0.869) rotate(0.03deg);">Visión general</span>
<span class="t" style="font-size:7.4px;line-height:9.25px;color:#f4f6f8;transform:translate(74.52px,129.68px) scaleX(0.918) rotate(0.03deg);">Sugerencias de</span>
<span class="t" style="font-size:7.4px;line-height:9.25px;color:#f4f6f8;transform:translate(74.69px,138.48px) scaleX(0.929) rotate(0.03deg);">palabras clave</span>
<span class="t" style="font-size:7.4px;line-height:9.25px;color:#f4f6f8;transform:translate(74.59px,155.78px) scaleX(0.876) rotate(0.03deg);">Resumen de la SERP</span>
<span class="t" style="font-size:7.4px;line-height:9.25px;color:#f4f6f8;transform:translate(74.55px,172.48px) scaleX(0.933) rotate(0.03deg);">Historial SERP</span>
<span class="t" style="font-size:7.4px;line-height:9.25px;color:#f4f6f8;transform:translate(74.77px,181.28px) scaleX(0.974) rotate(0.03deg);">orgánico</span>
<span class="t" style="font-size:7.4px;line-height:9.25px;color:#f4f6f8;transform:translate(74.53px,198.48px) scaleX(0.972) rotate(0.03deg);">Historial de Anuncios</span>
<span class="t" style="font-size:7.4px;line-height:9.25px;color:#f4f6f8;transform:translate(74.56px,215.48px) scaleX(0.907) rotate(0.03deg);">Expansión de la base de</span>
<span class="t" style="font-size:7.4px;line-height:9.25px;color:#f4f6f8;transform:translate(74.82px,224.18px) scaleX(0.980) rotate(0.03deg);">datos</span>
<span class="t" style="font-size:7.9px;line-height:9.88px;color:#f4f6f8;transform:translate(65.25px,246.71px) scaleX(0.946) rotate(0.03deg);">Gestor de Keywords</span>
<span class="t" style="font-size:7.9px;line-height:9.88px;color:#f4f6f8;transform:translate(65.41px,267.91px) scaleX(0.951) rotate(0.03deg);">Agrupación de</span>
<span class="t" style="font-size:7.9px;line-height:9.88px;color:#f4f6f8;transform:translate(65.13px,276.71px) scaleX(0.927) rotate(0.03deg);">palabras clave</span>
<span class="t" style="font-size:7.9px;line-height:9.88px;color:#f4f6f8;transform:translate(65.42px,297.91px) scaleX(0.982) rotate(0.03deg);">Autocompletado de</span>
<span class="t" style="font-size:7.9px;line-height:9.88px;color:#f4f6f8;transform:translate(65.12px,306.51px) scaleX(0.971) rotate(0.03deg);">los Motores de</span>
<span class="t" style="font-size:7.9px;line-height:9.88px;color:#f4f6f8;transform:translate(65.01px,315.11px) scaleX(0.926) rotate(0.03deg);">Búsqueda</span>
<span class="t" style="font-size:7.9px;line-height:9.88px;color:#f4f6f8;transform:translate(65.21px,336.01px) scaleX(0.976) rotate(0.03deg);">Comprobar volumen</span>
<span class="t" style="font-size:7.9px;line-height:9.88px;color:#f4f6f8;transform:translate(65.32px,344.71px) scaleX(0.914) rotate(0.03deg);">de búsqueda</span>
<span class="t" style="font-size:7.9px;line-height:9.88px;color:#f4f6f8;transform:translate(65.22px,366.01px) scaleX(0.970) rotate(0.03deg);">Comprobar estado</span>
<span class="t" style="font-size:7.9px;line-height:9.88px;color:#f4f6f8;transform:translate(65.31px,374.51px) scaleX(0.931) rotate(0.03deg);">de indexación de la</span>
<span class="t" style="font-size:7.9px;line-height:9.88px;color:#f4f6f8;transform:translate(65.13px,383.21px) scaleX(0.945) rotate(0.03deg);">página</span>
</nav>
<section class="card card-difficulty">
<span class="t" style="font-size:6.5px;line-height:8.12px;font-weight:700;letter-spacing:0.1px;color:#333;transform:translate(178.25px,132.62px) scaleX(0.908) rotate(0.03deg);">DIFICULTAD</span>
<span class="t" style="font-size:6.6px;line-height:8.25px;font-style:italic;font-family:'Liberation Serif',serif;color:#444;transform:translate(218.19px,130.12px) rotate(0.03deg);">i</span>
<span class="t" style="font-size:8.2px;line-height:10.25px;-webkit-text-stroke:0.15px;color:#3aa772;transform:translate(318.01px,132.2px) scaleX(0.946) rotate(0.03deg);">Actualizado</span>
<span class="t" style="font-size:20.5px;line-height:25.62px;font-weight:700;-webkit-text-stroke:1.0px;clip-path:polygon(-3px -3px,40px -3px,40px 16.88px,18.64px 16.88px,18.64px 19.78px,14.27px 19.78px,14.27px 16.88px,8.39px 16.88px,8.39px 19.78px,4.01px 19.78px,4.01px 16.88px,-3px 16.88px);color:#1c1c1c;transform:translate(257.85px,170.17px) scaleX(0.971) rotate(0.03deg);">11</span>
<span class="t" style="font-size:6.3px;line-height:7.88px;color:#5f6871;transform:translate(257.55px,196.23px) scaleX(0.991) rotate(0.03deg);">DE 100</span>
<span class="t" style="font-size:6.6px;line-height:8.25px;font-weight:700;letter-spacing:0.1px;color:#333;transform:translate(251.56px,222.62px) scaleX(0.901) rotate(0.03deg);">MUY FÁCIL</span>
<span class="t" style="font-size:5.9px;line-height:7.38px;color:#6e7a82;transform:translate(174.87px,246.28px) scaleX(0.995) rotate(0.03deg);">Tienes una probabilidad muy alta de posicionarte con esta palabra clave</span>
<span class="t" style="font-size:5.9px;line-height:7.38px;color:#6e7a82;transform:translate(242.42px,253.28px) scaleX(1.021) rotate(0.03deg);">sin ningún esfuerzo.</span>
</section>
<section class="card card-volume">
<span class="t" style="font-size:6.5px;line-height:8.12px;font-weight:700;letter-spacing:0.1px;color:#333;transform:translate(390.79px,132.62px) scaleX(0.889) rotate(0.03deg);">VOLUMEN DE BÚSQUEDA</span>
<span class="t" style="font-size:6.6px;line-height:8.25px;font-style:italic;font-family:'Liberation Serif',serif;color:#444;transform:translate(470.19px,130.12px) rotate(0.03deg);">i</span>
<span class="t" style="font-size:8.2px;line-height:10.25px;-webkit-text-stroke:0.15px;color:#3aa772;transform:translate(530.01px,132.2px) scaleX(0.946) rotate(0.03deg);">Actualizado</span>
<span class="t" style="font-size:11px;line-height:13.75px;-webkit-text-stroke:0.3px;color:#262626;transform:translate(390.8px,146.97px) scaleX(1.040) rotate(0.03deg);">260</span>
<span class="t" style="font-size:6.6px;line-height:8.25px;color:#8b95a0;transform:translate(390.77px,162.63px) scaleX(1.129) rotate(0.03deg);">800</span>
<span class="t" style="font-size:6.6px;line-height:8.25px;color:#6f7985;transform:translate(418.07px,196.1px) scaleX(0.969) rotate(0.03deg);">Sep 2024</span>
<span class="t" style="font-size:6.6px;line-height:8.25px;color:#6f7985;transform:translate(470.91px,196.1px) scaleX(0.968) rotate(0.03deg);">Ene 2025</span>
<span class="t" style="font-size:6.6px;line-height:8.25px;color:#6f7985;transform:translate(522.66px,196.1px) scaleX(0.939) rotate(0.03deg);">May 2025</span>
</section>
<section class="card card-intent">
<span class="t" style="font-size:6.5px;line-height:8.12px;font-weight:700;letter-spacing:0.1px;color:#333;transform:translate(390.75px,239.62px) scaleX(0.896) rotate(0.03deg);">INTENCIÓN DE BÚSQUEDA</span>
<span class="t" style="font-size:6.6px;line-height:8.25px;font-style:italic;font-family:'Liberation Serif',serif;color:#444;transform:translate(473.69px,237.12px) rotate(0.03deg);">i</span>
<span class="t" style="font-size:5.6px;line-height:7px;font-weight:700;color:#5b3a78;transform:translate(393.86px,256.32px) scaleX(0.892) rotate(0.03deg);">LOCAL</span>
<span class="t" style="font-size:5.6px;line-height:7px;font-weight:700;color:#8a5a12;transform:translate(420.65px,256.32px) scaleX(0.923) rotate(0.03deg);">COMERCIAL</span>
</section>
<section class="card card-cpc">
<span class="t" style="font-size:6.5px;line-height:8.12px;font-weight:700;letter-spacing:0.1px;color:#333;transform:translate(602.93px,132.62px) scaleX(0.815) rotate(0.03deg);">CPC</span>
<span class="t" style="font-size:6.6px;line-height:8.25px;font-style:italic;font-family:'Liberation Serif',serif;color:#444;transform:translate(618.69px,130.12px) rotate(0.03deg);">i</span>
<span class="t" style="font-size:11px;line-height:13.75px;-webkit-text-stroke:0.35px;color:#262626;transform:translate(603.04px,148.98px) scaleX(0.936) rotate(0.03deg);">€1.19</span>
<span class="t" style="font-size:6px;line-height:7.5px;letter-spacing:0.2px;color:#6f7985;transform:translate(711.17px,152.37px) scaleX(0.981) rotate(0.03deg);">COMPETENCIA:</span>
<span class="t" style="font-size:6.2px;line-height:7.75px;font-weight:700;color:#333;transform:translate(763.38px,151.46px) scaleX(1.062) rotate(0.03deg);">0.04</span>
<span class="t" style="font-size:6.6px;line-height:8.25px;font-style:italic;font-family:'Liberation Serif',serif;color:#444;transform:translate(780.19px,149.12px) rotate(0.03deg);">i</span>
<span class="t" style="font-size:5.6px;line-height:7px;color:#8b95a0;transform:translate(600.46px,186.63px) scaleX(0.860) rotate(0.03deg);">ES</span>
<span class="t" style="font-size:5.6px;line-height:7px;color:#8b95a0;transform:translate(600.47px,227.63px) scaleX(0.987) rotate(0.03deg);">CL</span>
<span class="t" style="font-size:6.4px;line-height:8px;color:#6f7985;transform:translate(642.49px,255.13px) scaleX(1.033) rotate(0.03deg);">0.25</span>
<span class="t" style="font-size:6.4px;line-height:8px;color:#6f7985;transform:translate(678.47px,255.13px) scaleX(1.015) rotate(0.03deg);">0.5</span>
<span class="t" style="font-size:6.4px;line-height:8px;color:#6f7985;transform:translate(710.49px,255.13px) scaleX(1.033) rotate(0.03deg);">0.75</span>
<span class="t" style="font-size:6.4px;line-height:8px;color:#6f7985;transform:translate(749.41px,255.13px) scaleX(0.884) rotate(0.03deg);">1</span>
<span class="t" style="font-size:6.4px;line-height:8px;color:#6f7985;transform:translate(773.14px,255.13px) scaleX(0.995) rotate(0.03deg);">1.25</span>
</section>
<section class="card card-global">
<span class="t" style="font-size:6.5px;line-height:8.12px;font-weight:700;letter-spacing:0.1px;color:#333;transform:translate(814.79px,132.62px) scaleX(0.893) rotate(0.03deg);">VOLUMEN GLOBAL</span>
<span class="t" style="font-size:6.6px;line-height:8.25px;font-style:italic;font-family:'Liberation Serif',serif;color:#444;transform:translate(875.69px,130.12px) rotate(0.03deg);">i</span>
<span class="t" style="font-size:11px;line-height:13.75px;-webkit-text-stroke:0.3px;color:#262626;transform:translate(814.96px,146.97px) scaleX(0.970) rotate(0.03deg);">410</span>
<span class="t" style="font-size:7.4px;line-height:9.25px;-webkit-text-stroke:0.2px;color:#262626;transform:translate(828.6px,166.23px) scaleX(0.763) rotate(0.03deg);">ES</span>
<span class="t" style="font-size:7.4px;line-height:9.25px;-webkit-text-stroke:0.12px;color:#2a2a2a;transform:translate(964.43px,166.23px) scaleX(0.933) rotate(0.03deg);">260</span>
<span class="t" style="font-size:7.2px;line-height:9px;color:#7d8690;transform:translate(981.76px,166.31px) scaleX(0.928) rotate(0.03deg);">63%</span>
<span class="t" style="font-size:7.4px;line-height:9.25px;-webkit-text-stroke:0.2px;color:#262626;transform:translate(828.49px,178.98px) scaleX(0.928) rotate(0.03deg);">MX</span>
<span class="t" style="font-size:7.4px;line-height:9.25px;-webkit-text-stroke:0.12px;color:#2a2a2a;transform:translate(968.44px,178.98px) scaleX(0.927) rotate(0.03deg);">40</span>
<span class="t" style="font-size:7.2px;line-height:9px;color:#7d8690;transform:translate(981.39px,179.06px) scaleX(0.940) rotate(0.03deg);">10%</span>
<span class="t" style="font-size:7.4px;line-height:9.25px;-webkit-text-stroke:0.2px;color:#262626;transform:translate(828.57px,191.73px) scaleX(0.846) rotate(0.03deg);">US</span>
<span class="t" style="font-size:7.4px;line-height:9.25px;-webkit-text-stroke:0.12px;color:#2a2a2a;transform:translate(967.99px,191.73px) scaleX(0.971) rotate(0.03deg);">30</span>
<span class="t" style="font-size:7.2px;line-height:9px;color:#7d8690;transform:translate(985.3px,191.81px) scaleX(0.912) rotate(0.03deg);">7%</span>
<span class="t" style="font-size:7.4px;line-height:9.25px;-webkit-text-stroke:0.2px;color:#262626;transform:translate(828.66px,204.48px) scaleX(0.766) rotate(0.03deg);">CL</span>
<span class="t" style="font-size:7.4px;line-height:9.25px;-webkit-text-stroke:0.12px;color:#2a2a2a;transform:translate(968.38px,204.48px) scaleX(0.943) rotate(0.03deg);">20</span>
<span class="t" style="font-size:7.2px;line-height:9px;color:#7d8690;transform:translate(985.13px,204.56px) scaleX(0.933) rotate(0.03deg);">5%</span>
<span class="t" style="font-size:7.4px;line-height:9.25px;-webkit-text-stroke:0.2px;color:#262626;transform:translate(828.71px,217.23px) scaleX(0.835) rotate(0.03deg);">CO</span>
<span class="t" style="font-size:7.4px;line-height:9.25px;-webkit-text-stroke:0.12px;color:#2a2a2a;transform:translate(968.38px,217.23px) scaleX(0.943) rotate(0.03deg);">20</span>
<span class="t" style="font-size:7.2px;line-height:9px;color:#7d8690;transform:translate(985.13px,217.31px) scaleX(0.933) rotate(0.03deg);">5%</span>
<span class="t" style="font-size:7.4px;line-height:9.25px;-webkit-text-stroke:0.2px;color:#262626;transform:translate(814.92px,229.98px) scaleX(0.852) rotate(0.03deg);">OTHER</span>
<span class="t" style="font-size:7.4px;line-height:9.25px;-webkit-text-stroke:0.12px;color:#2a2a2a;transform:translate(968.44px,229.98px) scaleX(0.927) rotate(0.03deg);">40</span>
<span class="t" style="font-size:7.2px;line-height:9px;color:#7d8690;transform:translate(981.39px,230.06px) scaleX(0.940) rotate(0.03deg);">10%</span>
<span class="t" style="font-size:6px;line-height:7.5px;color:#8b95a0;transform:translate(814.35px,255.64px) scaleX(1.017) rotate(0.03deg);">1 - 6 de 6</span>
</section>
<section class="ideas">
<h2 class="t" style="font-size:11.3px;line-height:14.12px;font-weight:400;-webkit-text-stroke:0.45px;color:#2e2e2e;transform:translate(178.38px,299.14px) scaleX(0.908) rotate(0.03deg);">Ideas de palabras clave</h2>
<span class="t" style="font-size:6.6px;line-height:8.25px;font-style:italic;font-family:'Liberation Serif',serif;color:#444;transform:translate(290.19px,299.12px) rotate(0.03deg);">i</span>
<span class="t" style="font-size:6.3px;line-height:7.88px;font-weight:700;letter-spacing:0.2px;color:#565f69;transform:translate(177.58px,336.86px) scaleX(0.883) rotate(0.03deg);">PALABRAS CLAVE SIMILARES</span>
<span class="t" style="font-size:6.3px;line-height:7.88px;font-weight:700;letter-spacing:0.2px;color:#565f69;transform:translate(342.49px,331.96px) scaleX(0.880) rotate(0.03deg);">VOL. DE</span>
<span class="t" style="font-size:6.3px;line-height:7.88px;font-weight:700;letter-spacing:0.2px;color:#565f69;transform:translate(332.37px,340.46px) scaleX(0.889) rotate(0.03deg);">BÚSQUEDA</span>
<span class="t" style="font-size:6.3px;line-height:7.88px;font-weight:700;letter-spacing:0.2px;color:#565f69;transform:translate(400.27px,336.86px) scaleX(0.920) rotate(0.03deg);">DIFICULTAD</span>
<span class="t" style="font-size:6.3px;line-height:7.88px;font-weight:700;letter-spacing:0.2px;color:#565f69;transform:translate(456.78px,336.86px) scaleX(0.883) rotate(0.03deg);">PALABRAS CLAVE RELACIONADAS</span>
<span class="t" style="font-size:6.3px;line-height:7.88px;font-weight:700;letter-spacing:0.2px;color:#565f69;transform:translate(622.19px,331.96px) scaleX(0.880) rotate(0.03deg);">VOL. DE</span>
<span class="t" style="font-size:6.3px;line-height:7.88px;font-weight:700;letter-spacing:0.2px;color:#565f69;transform:translate(612.07px,340.46px) scaleX(0.889) rotate(0.03deg);">BÚSQUEDA</span>
<span class="t" style="font-size:6.3px;line-height:7.88px;font-weight:700;letter-spacing:0.2px;color:#565f69;transform:translate(679.97px,336.86px) scaleX(0.920) rotate(0.03deg);">DIFICULTAD</span>
<span class="t" style="font-size:6.3px;line-height:7.88px;font-weight:700;letter-spacing:0.2px;color:#565f69;transform:translate(736.08px,336.86px) scaleX(0.893) rotate(0.03deg);">PREGUNTAS</span>
<span class="t" style="font-size:6.6px;line-height:8.25px;font-style:italic;font-family:'Liberation Serif',serif;color:#444;transform:translate(777.19px,334.12px) rotate(0.03deg);">i</span>
<span class="t" style="font-size:7.9px;line-height:9.88px;color:#3a7dab;transform:translate(191.28px,362.06px) scaleX(0.946) rotate(0.03deg);">asesor seo profesional</span>
<span class="t" style="font-size:7.9px;line-height:9.88px;-webkit-text-stroke:0.25px;color:#2a2a2a;transform:translate(360.67px,361.68px) scaleX(1.022) rotate(0.03deg);">0</span>
<span class="t" style="font-size:7.8px;line-height:9.75px;-webkit-text-stroke:0.25px;color:#2a2a2a;transform:translate(425.77px,361.83px) scaleX(1.032) rotate(0.03deg);">0</span>
<span class="t" style="font-size:7.9px;line-height:9.88px;color:#3a7dab;transform:translate(470.49px,362.06px) scaleX(0.970) rotate(0.03deg);">consultor seo</span>
<span class="t" style="font-size:7.9px;line-height:9.88px;-webkit-text-stroke:0.25px;color:#2a2a2a;transform:translate(629.69px,361.68px) scaleX(0.936) rotate(0.03deg);">6.6K</span>
<span class="t" style="font-size:7.8px;line-height:9.75px;-webkit-text-stroke:0.25px;color:#2a2a2a;transform:translate(702.04px,361.83px) scaleX(0.932) rotate(0.03deg);">27</span>
<span class="t" style="font-size:7.9px;line-height:9.88px;color:#3a7dab;transform:translate(191.27px,384.36px) scaleX(0.932) rotate(0.03deg);">asesor seo online</span>
<span class="t" style="font-size:7.9px;line-height:9.88px;-webkit-text-stroke:0.25px;color:#2a2a2a;transform:translate(360.66px,383.98px) scaleX(1.022) rotate(0.03deg);">0</span>
<span class="t" style="font-size:7.8px;line-height:9.75px;-webkit-text-stroke:0.25px;color:#2a2a2a;transform:translate(421.85px,384.13px) scaleX(0.972) rotate(0.03deg);">18</span>
<span class="t" style="font-size:7.9px;line-height:9.88px;color:#3a7dab;transform:translate(470.49px,384.36px) scaleX(0.969) rotate(0.03deg);">experto seo</span>
<span class="t" style="font-size:7.9px;line-height:9.88px;-webkit-text-stroke:0.25px;color:#2a2a2a;transform:translate(630.86px,383.98px) scaleX(0.858) rotate(0.03deg);">1.3K</span>
<span class="t" style="font-size:7.8px;line-height:9.75px;-webkit-text-stroke:0.25px;color:#2a2a2a;transform:translate(701.97px,384.13px) scaleX(0.947) rotate(0.03deg);">37</span>
<span class="t" style="font-size:7.9px;line-height:9.88px;color:#3a7dab;transform:translate(191.27px,406.61px) scaleX(0.926) rotate(0.03deg);">asesor seo barcelona</span>
<span class="t" style="font-size:7.9px;line-height:9.88px;-webkit-text-stroke:0.25px;color:#2a2a2a;transform:translate(360.67px,406.23px) scaleX(1.022) rotate(0.03deg);">0</span>
<span class="t" style="font-size:7.8px;line-height:9.75px;-webkit-text-stroke:0.25px;color:#2a2a2a;transform:translate(421.85px,406.38px) scaleX(0.955) rotate(0.03deg);">14</span>
<span class="t" style="font-size:7.9px;line-height:9.88px;color:#3a7dab;transform:translate(470.35px,406.61px) scaleX(0.967) rotate(0.03deg);">seo consulting</span>
<span class="t" style="font-size:7.9px;line-height:9.88px;-webkit-text-stroke:0.25px;color:#2a2a2a;transform:translate(630.86px,406.23px) scaleX(0.858) rotate(0.03deg);">1.3K</span>
<span class="t" style="font-size:7.8px;line-height:9.75px;-webkit-text-stroke:0.25px;color:#2a2a2a;transform:translate(701.95px,406.38px) scaleX(0.932) rotate(0.03deg);">39</span>
<span class="t" style="font-size:7.9px;line-height:9.88px;color:#3a7dab;transform:translate(191.27px,428.91px) scaleX(0.934) rotate(0.03deg);">asesor seo gijon</span>
<span class="t" style="font-size:7.9px;line-height:9.88px;-webkit-text-stroke:0.25px;color:#2a2a2a;transform:translate(360.66px,428.53px) scaleX(1.022) rotate(0.03deg);">0</span>
<span class="t" style="font-size:7.8px;line-height:9.75px;-webkit-text-stroke:0.25px;color:#2a2a2a;transform:translate(425.77px,428.68px) scaleX(1.032) rotate(0.03deg);">0</span>
<span class="t" style="font-size:7.9px;line-height:9.88px;color:#3a7dab;transform:translate(470.49px,428.91px) scaleX(0.963) rotate(0.03deg);">consultor seo local</span>
<span class="t" style="font-size:7.9px;line-height:9.88px;-webkit-text-stroke:0.25px;color:#2a2a2a;transform:translate(637.06px,428.53px) scaleX(0.824) rotate(0.03deg);">1K</span>
<span class="t" style="font-size:7.8px;line-height:9.75px;-webkit-text-stroke:0.25px;color:#2a2a2a;transform:translate(701.55px,428.68px) scaleX(0.969) rotate(0.03deg);">15</span>
<span class="t" style="font-size:7.9px;line-height:9.88px;color:#3a7dab;transform:translate(191.27px,451.31px) scaleX(0.922) rotate(0.03deg);">asesor seo costa rica</span>
<span class="t" style="font-size:7.9px;line-height:9.88px;-webkit-text-stroke:0.25px;color:#2a2a2a;transform:translate(360.67px,450.93px) scaleX(1.022) rotate(0.03deg);">0</span>
<span class="t" style="font-size:7.8px;line-height:9.75px;-webkit-text-stroke:0.25px;color:#2a2a2a;transform:translate(425.77px,451.08px) scaleX(1.032) rotate(0.03deg);">0</span>
<span class="t" style="font-size:7.9px;line-height:9.88px;color:#3a7dab;transform:translate(470.35px,451.31px) scaleX(0.968) rotate(0.03deg);">seo consultants</span>
<span class="t" style="font-size:7.9px;line-height:9.88px;-webkit-text-stroke:0.25px;color:#2a2a2a;transform:translate(633.17px,450.93px) scaleX(0.870) rotate(0.03deg);">990</span>
<span class="t" style="font-size:7.8px;line-height:9.75px;-webkit-text-stroke:0.25px;color:#2a2a2a;transform:translate(701.55px,451.08px) scaleX(0.972) rotate(0.03deg);">18</span>
<span class="t" style="font-size:6.3px;line-height:7.88px;font-weight:700;color:#2e2e2e;transform:translate(200.38px,479.76px) scaleX(0.915) rotate(0.03deg);">VER INFORME DETALLADO (6)</span>
<span class="t" style="font-size:6.3px;line-height:7.88px;font-weight:700;color:#2e2e2e;transform:translate(479.37px,479.76px) scaleX(0.924) rotate(0.03deg);">VER INFORME DETALLADO (360)</span>
</section>
<section class="questions-empty">
<span class="t" style="font-size:10.8px;line-height:13.5px;color:#3a3a55;transform:translate(741.81px,455.75px) scaleX(0.989) rotate(0.03deg);">Sin datos</span>
<span class="t" style="font-size:7.4px;line-height:9.25px;color:#7a7f87;transform:translate(742px,473.78px) scaleX(1.002) rotate(0.03deg);">No hemos encontrado ninguna palabra clave basada en preguntas.</span>
</section>
</div>
</body>
</html>
